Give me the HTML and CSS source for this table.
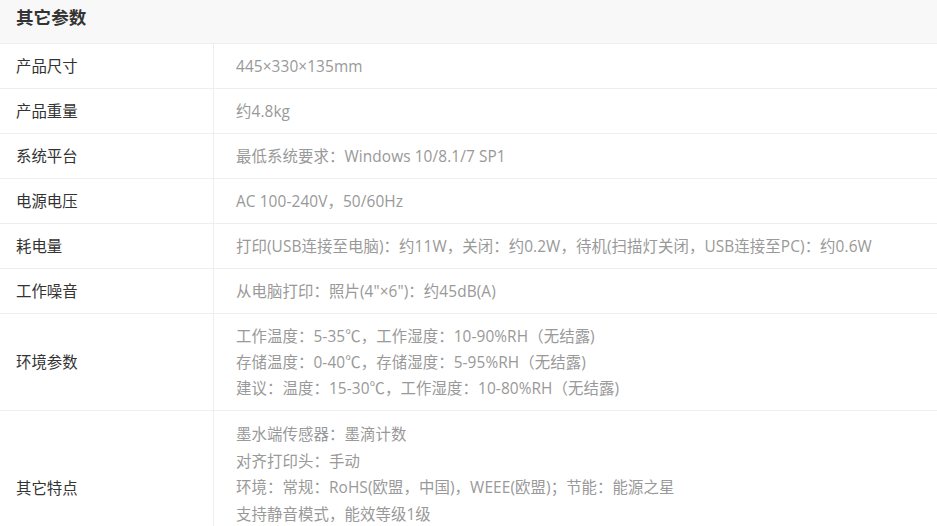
FILE: index.html
```html
<!DOCTYPE html>
<html lang="zh-CN">
<head>
  <meta charset="UTF-8">
  <title>其它参数</title>
  <link rel="stylesheet" href="styles.css">
</head>
<body>

  <div class="spec-box">
    <div class="spec-title">其它参数</div>

    <div class="spec-row">
      <div class="spec-name">产品尺寸</div>
      <div class="spec-value">445×330×135mm</div>
    </div>
    <div class="spec-row">
      <div class="spec-name">产品重量</div>
      <div class="spec-value">约4.8kg</div>
    </div>
    <div class="spec-row">
      <div class="spec-name">系统平台</div>
      <div class="spec-value">最低系统要求：Windows 10/8.1/7 SP1</div>
    </div>
    <div class="spec-row">
      <div class="spec-name">电源电压</div>
      <div class="spec-value">AC 100-240V，50/60Hz</div>
    </div>
    <div class="spec-row">
      <div class="spec-name">耗电量</div>
      <div class="spec-value">打印(USB连接至电脑)：约11W，关闭：约0.2W，待机(扫描灯关闭，USB连接至PC)：约0.6W</div>
    </div>
    <div class="spec-row">
      <div class="spec-name">工作噪音</div>
      <div class="spec-value">从电脑打印：照片(4"×6")：约45dB(A)</div>
    </div>
    <div class="spec-row">
      <div class="spec-name">环境参数</div>
      <div class="spec-value">
        工作温度：5-35℃，工作湿度：10-90%RH（无结露)<br>
        存储温度：0-40℃，存储湿度：5-95%RH（无结露)<br>
        建议：温度：15-30℃，工作湿度：10-80%RH（无结露)
      </div>
    </div>
    <div class="spec-row">
      <div class="spec-name">其它特点</div>
      <div class="spec-value spec-list">
        墨水端传感器：墨滴计数<br>
        对齐打印头：手动<br>
        环境：常规：RoHS(欧盟，中国)，WEEE(欧盟)；节能：能源之星<br>
        支持静音模式，能效等级1级
      </div>
    </div>
  </div>

</body>
</html>
```

FILE: styles.css
```css
* { margin: 0; padding: 0; box-sizing: border-box; }
body {
  background-color: #ffffff;
  font-family: "Open Sans", "Noto Sans CJK SC", sans-serif;
  font-size: 15.4px;
}
.spec-box {
  width: 100%;
}
.spec-title {
  background-color: #f8f8f8;
  height: 44px;
  padding: 4px 16px 0;
  line-height: 26px;
  font-size: 17.6px;
  font-weight: bold;
  color: #333333;
  border-bottom: 1px solid #eeeeee;
}
.spec-row {
  display: flex;
  border-bottom: 1px solid #eeeeee;
}
.spec-name {
  width: 214px;
  flex-shrink: 0;
  display: flex;
  align-items: center;
  padding: 10px 16px 8px;
  line-height: 26px;
  color: #333333;
  border-right: 1px solid #eeeeee;
}
.spec-value {
  flex: 1;
  padding: 10px 22px 8px;
  line-height: 26px;
  letter-spacing: 0.1px;
  color: #999999;
}
.spec-list {
  padding-top: 11px;
  padding-bottom: 36px;
  line-height: 26.7px;
}
```
